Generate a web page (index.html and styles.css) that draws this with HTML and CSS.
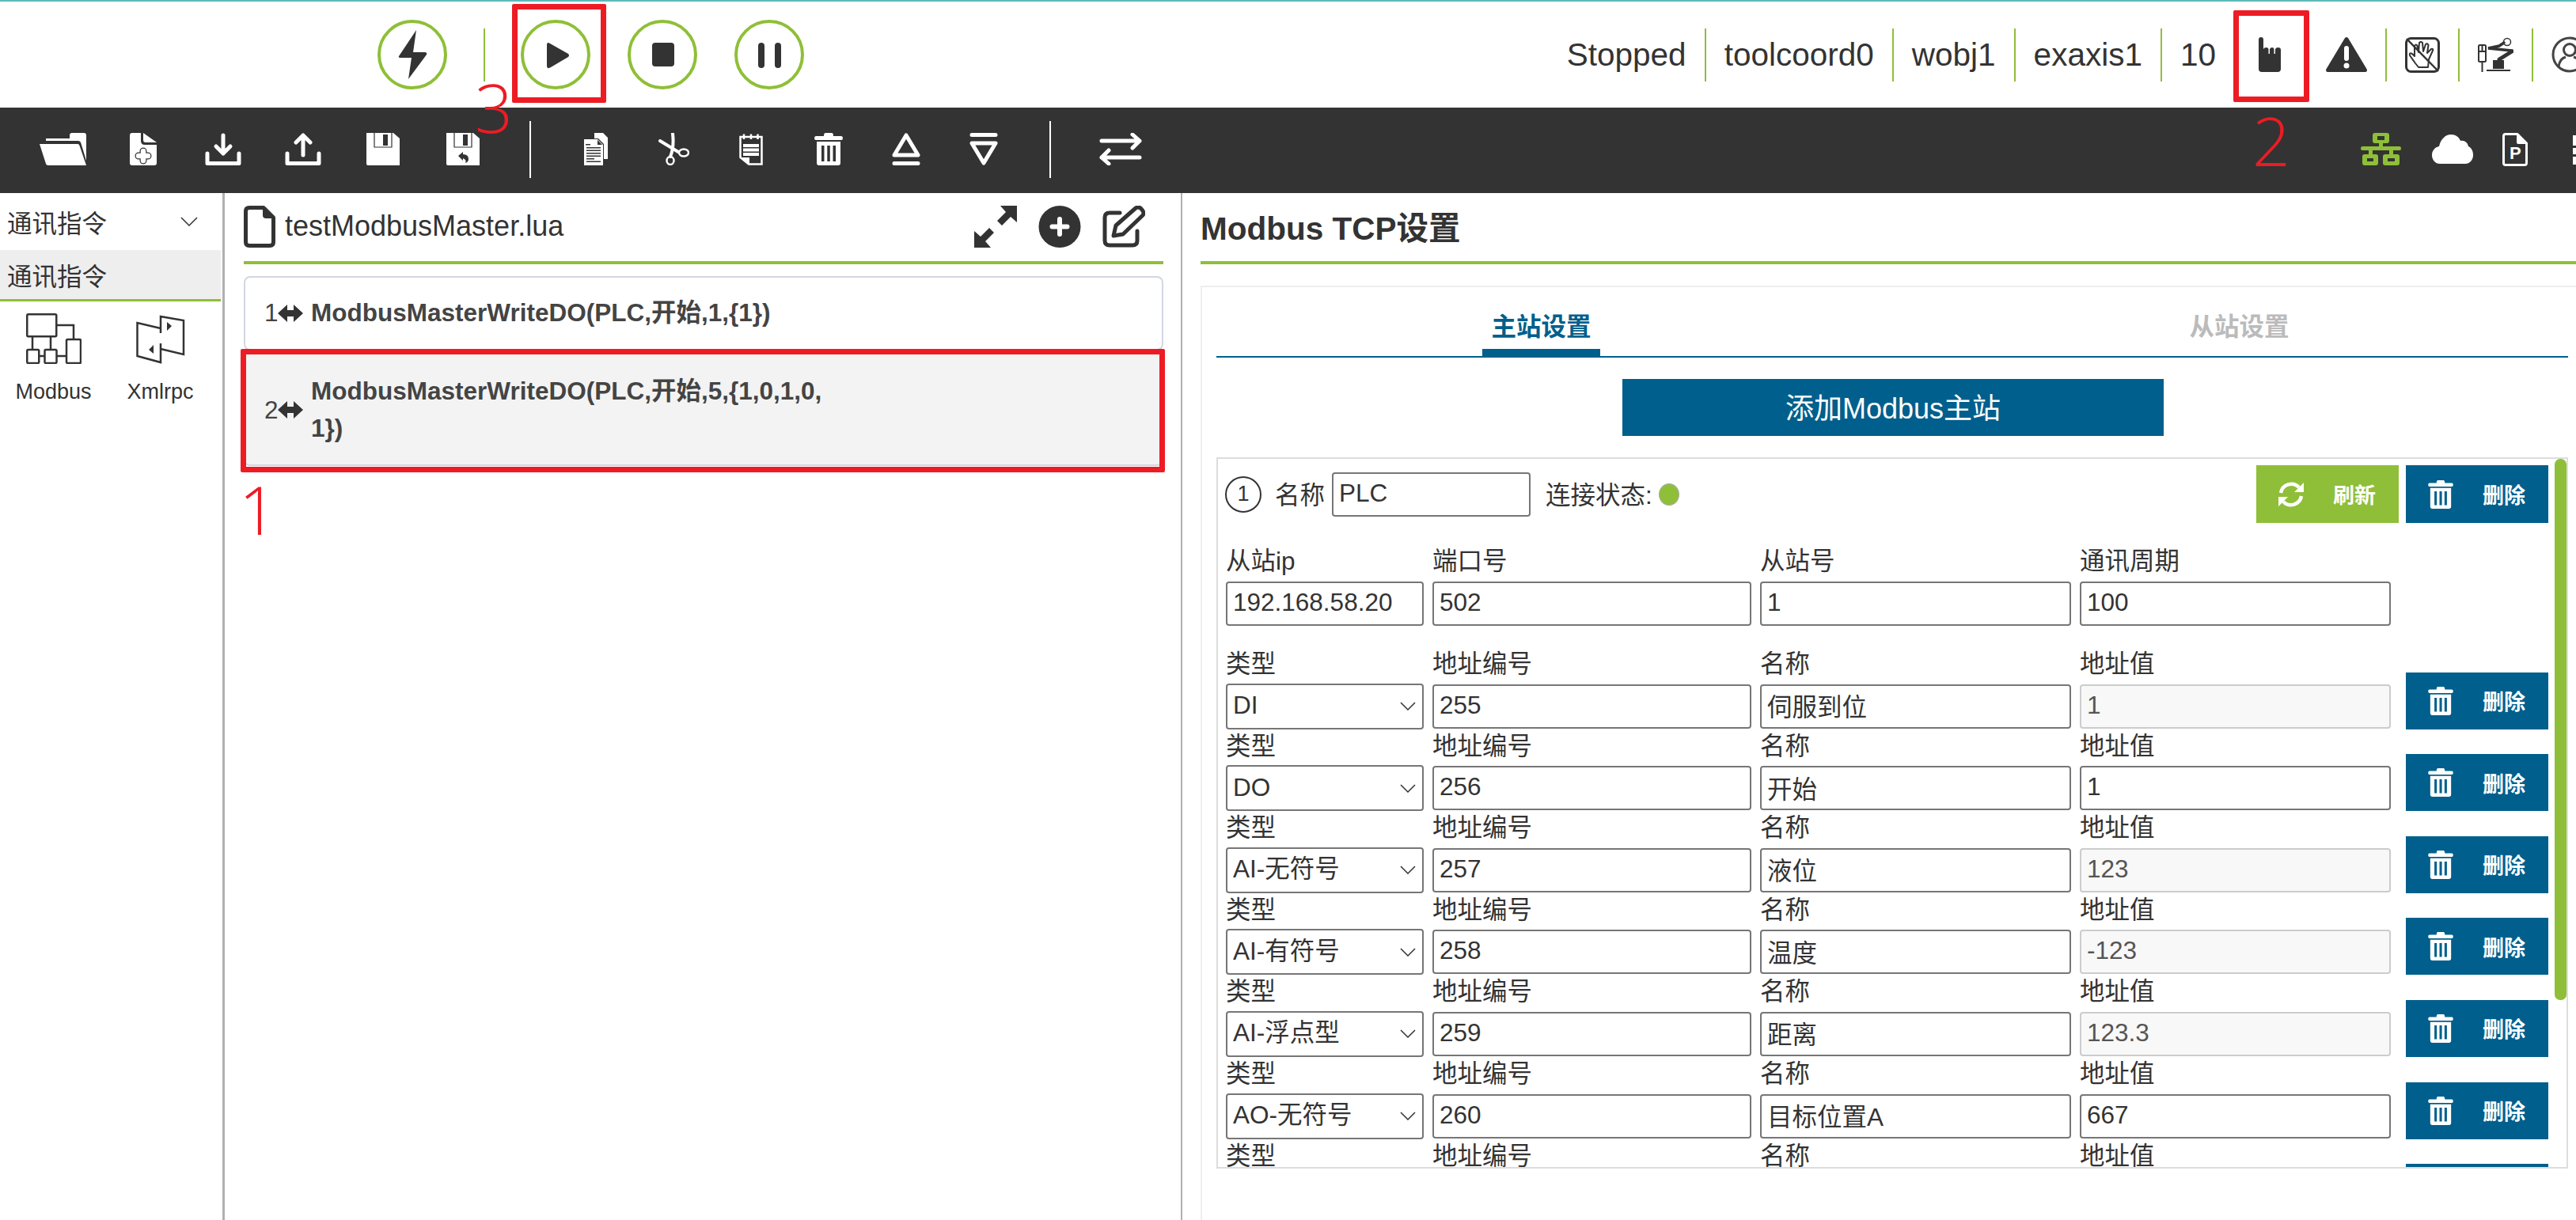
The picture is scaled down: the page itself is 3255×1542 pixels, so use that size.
FILE: index.html
```html
<!DOCTYPE html>
<html lang="zh-CN">
<head>
    <meta charset="UTF-8">
    <title>Modbus TCP设置</title>
    <link rel="stylesheet" href="styles.css">
</head>
<body>
    <!-- shared icons -->
    <svg class="sprite" width="0" height="0">
        <symbol id="i-trash" viewBox="0 0 36 41">
            <path fill="currentColor" fill-rule="evenodd" d="M14 0H22Q24 0 24 4H34Q36 4 36 6.500Q36 9 34 9H2Q0 9 0 6.500Q0 4 2 4H12Q12 0 14 0ZM3 11H33V38Q33 41 30 41H6Q3 41 3 38ZM9 16V36H12.500V16ZM16.300 16V36H19.800V16ZM23.500 16V36H27V16Z"/>
        </symbol>
        <symbol id="i-refresh" viewBox="0 0 32 32">
            <g fill="none" stroke="currentColor" stroke-width="4.500">
                <path d="M3 14A13.500 13.500 0 0 1 26 7"/>
                <path d="M29 18A13.500 13.500 0 0 1 6 25"/>
            </g>
            <path fill="currentColor" d="M32 1V13H20ZM0 31V19H12Z"/>
        </symbol>
        <symbol id="i-both" viewBox="0 0 32 24">
            <path fill="currentColor" d="M0 12L12 1V8H20V1L32 12L20 23V16H12V23Z"/>
        </symbol>
    </svg>

    <div class="topbar">
        <div class="run-btn">
            <svg width="80" height="80" viewBox="4 4 80 80"><path fill="#333" d="M49 13L27 46Q26 48 29 48H43L39 75L62 44Q63 41 60 41H45Z"/></svg>
        </div>
        <div class="run-sep"></div>
        <div class="run-btn">
            <svg width="80" height="80" viewBox="4 4 80 80"><path fill="#333" d="M33 32Q33 27 37 30L60 43Q62 45 60 47L38 60Q33 63 33 58Z"/></svg>
        </div>
        <div class="run-btn run-gap">
            <svg width="80" height="80" viewBox="4 4 80 80"><rect x="31" y="29" width="28" height="30" rx="4" fill="#333"/></svg>
        </div>
        <div class="run-btn run-gap">
            <svg width="80" height="80" viewBox="4 4 80 80"><rect x="30" y="29" width="8" height="32" rx="4" fill="#333"/><rect x="51" y="29" width="8" height="32" rx="4" fill="#333"/></svg>
        </div>

        <div class="status">
            <div class="status-item first">Stopped</div>
            <div class="status-item">toolcoord0</div>
            <div class="status-item">wobj1</div>
            <div class="status-item">exaxis1</div>
            <div class="status-item">10</div>
            <div class="status-item icons">
                <svg width="28" height="44" viewBox="0 0 28 44"><path fill="#333" d="M0 3Q0 0 3 0Q6 0 6 3V15Q7 13 9.500 13Q12 13 12.500 15V21H14V15Q15 13 17 13Q19 13 19.500 15V21H21V15Q22 13 24.500 13Q28 13 28 16V40Q28 44 24 44H4Q0 44 0 40Z"/></svg>
                <svg class="warn" width="52" height="44" viewBox="0 0 52 44"><path fill="#333" d="M24 1Q26 -1 28 1L52 41Q52 44 50 44H2Q0 44 0 41Z"/><rect x="23" y="11" width="6" height="19" rx="3" fill="#fff"/><circle cx="26" cy="36" r="3.500" fill="#fff"/></svg>
            </div>
            <div class="status-item">
                <svg width="44" height="45" viewBox="0 0 44 45">
                    <rect x="1.500" y="1.500" width="41" height="42" rx="6" fill="none" stroke="#333" stroke-width="3"/>
                    <path fill="none" stroke="#333" stroke-width="2" stroke-linejoin="round" d="M13 33L6 23Q5 19 9 21L12 24L12 11Q14 8 15.500 11L17 19L18 7Q20 5 22 7L23 18L26 9Q28 7 29.500 10L28 20L33 15Q36 14 35 17L30 28L29 38H17Z"/>
                    <path stroke="#333" stroke-width="2.500" d="M2 2L42 43"/>
                </svg>
            </div>
            <div class="status-item">
                <svg width="45" height="44" viewBox="0 0 45 44">
                    <rect x="1" y="10" width="9" height="21" rx="1.500" fill="none" stroke="#333" stroke-width="2"/>
                    <path fill="none" stroke="#333" stroke-width="2" d="M5.500 10V18M1 18H10M5.500 31V44"/>
                    <path fill="#333" d="M19 29H33V40H19ZM11 41H41V43H11Z"/>
                    <path fill="none" stroke="#333" stroke-width="5" stroke-linecap="round" d="M27 28L43 18"/>
                    <path fill="none" stroke="#333" stroke-width="3.500" stroke-linecap="round" d="M43 17L13 14L27 11L33 7"/>
                    <circle cx="37" cy="6" r="4.500" fill="none" stroke="#333" stroke-width="1.500"/>
                </svg>
            </div>
            <div class="status-item last">
                <svg width="46" height="46" viewBox="0 0 46 46">
                    <g fill="none" stroke="#444" stroke-width="3">
                        <circle cx="23" cy="23" r="21"/>
                        <circle cx="23" cy="17" r="7.500"/>
                        <path d="M9 39Q10 28 18 26M37 39Q36 28 28 26"/>
                    </g>
                </svg>
            </div>
        </div>
    </div>

    <div class="toolbar">
        <div class="tools tools-file">
            <div class="tool">
                <svg width="59" height="41" viewBox="0 0 59 41"><path fill="#fff" d="M8 7H38V3Q38 0 41 0H56Q59 0 59 3V35L52 12Q51 10 49 10H8Z"/><path fill="#fff" d="M0 14H48Q50 14 50.500 16L59 41H11Q8.500 41 8 39Z"/></svg>
            </div>
            <div class="tool">
                <svg width="34" height="41" viewBox="0 0 34 41">
                    <path fill="#fff" d="M3 0H14V10Q14 15 19 15H34V38Q34 41 31 41H3Q0 41 0 38V3Q0 0 3 0ZM17 0L34 12H20Q17 12 17 9Z"/>
                    <path stroke="#333" stroke-width="9" stroke-linecap="round" d="M17 23V35M11 29H23"/>
                    <path stroke="#fff" stroke-width="6.500" stroke-linecap="round" d="M17 23V35M11 29H23"/>
                </svg>
            </div>
            <div class="tool">
                <svg width="46" height="41" viewBox="0 0 46 41"><path fill="none" stroke="#fff" stroke-width="5" stroke-linecap="round" stroke-linejoin="round" d="M3 26V38.500H43V26M23 3V26M14 17L23 26L32 17"/></svg>
            </div>
            <div class="tool">
                <svg width="46" height="41" viewBox="0 0 46 41"><path fill="none" stroke="#fff" stroke-width="5" stroke-linecap="round" stroke-linejoin="round" d="M3 26V38.500H43V26M23 3V28M14 12L23 3L32 12"/></svg>
            </div>
            <div class="tool">
                <svg width="42" height="41" viewBox="0 0 42 41">
                    <path fill="#fff" d="M0 0H34L42 7V41H2Q0 41 0 39Z"/>
                    <path fill="none" stroke="#333" stroke-width="1.200" d="M10 0V18H32V0"/>
                    <rect x="21" y="2" width="6" height="14" fill="#333"/>
                </svg>
            </div>
            <div class="tool">
                <svg width="42" height="41" viewBox="0 0 42 41">
                    <path fill="#fff" d="M0 0H34L42 7V41H2Q0 41 0 39Z"/>
                    <path fill="none" stroke="#333" stroke-width="1.200" d="M10 0V18H32V0"/>
                    <rect x="21" y="2" width="6" height="14" fill="#333"/>
                    <path fill="#333" d="M15 29L21 24V27Q28 27 28 33Q28 37 24 38Q26 34 21 32V35Z"/>
                </svg>
            </div>
        </div>
        <div class="tool-sep"></div>
        <div class="tools tools-edit">
            <div class="tool">
                <svg width="31" height="41" viewBox="0 0 31 41">
                    <path fill="#fff" d="M13 0H24L30 6V33H25V14L18 7H13Z"/>
                    <path fill="#fff" d="M0 8H17L24 15V41H0Z"/>
                    <path fill="#333" d="M17 9L23 15H17ZM2 14H8V15.500H2ZM3 18H21V19.500H3ZM3 21.500H21V23H3ZM3 25H21V26.500H3ZM3 28.500H21V30H3ZM3 32H13V33.500H3ZM3 35.500H21V37H3Z"/>
                </svg>
            </div>
            <div class="tool">
                <svg width="39" height="41" viewBox="0 0 39 41">
                    <g fill="none" stroke="#fff" stroke-linecap="round">
                        <path stroke-width="4" d="M18 1Q20 18 15 30"/>
                        <path stroke-width="4" d="M2 10L25 24"/>
                        <ellipse cx="15" cy="35" rx="4.500" ry="5" stroke-width="2.500"/>
                        <ellipse cx="32" cy="25" rx="6" ry="4.500" stroke-width="2.500"/>
                    </g>
                </svg>
            </div>
            <div class="tool">
                <svg width="30" height="41" viewBox="0 0 30 41">
                    <path fill="none" stroke="#fff" stroke-width="2.500" d="M1.500 5H28.500V39.500H12L1.500 31ZM6 8V1.500M15 8V1.500M23.500 8V1.500"/>
                    <path fill="#fff" d="M5 14H25V18H5ZM5 19.500H25V23.500H5ZM5 25H25V29H5ZM2 31H13V40Z"/>
                </svg>
            </div>
            <div class="tool"><svg width="36" height="41"><use href="#i-trash"/></svg></div>
            <div class="tool">
                <svg width="36" height="41" viewBox="0 0 36 41"><path fill="none" stroke="#fff" stroke-width="5" stroke-linecap="round" stroke-linejoin="round" d="M18 3L33 28H3ZM3 38.500H33"/></svg>
            </div>
            <div class="tool">
                <svg width="36" height="41" viewBox="0 0 36 41"><path fill="none" stroke="#fff" stroke-width="5" stroke-linecap="round" stroke-linejoin="round" d="M18 38L33 13H3ZM3 2.500H33"/></svg>
            </div>
        </div>
        <div class="tool-sep"></div>
        <svg class="tool-swap" width="54" height="41" viewBox="0 0 54 41"><path fill="none" stroke="#fff" stroke-width="5" stroke-linecap="round" stroke-linejoin="round" d="M3 10H51M42 2L51 10L42 19M51 31H3M12 22L3 31L12 39"/></svg>

        <div class="tools-right">
            <svg width="52" height="42" viewBox="0 0 52 42">
                <path fill="#8fbf38" fill-rule="evenodd" d="M18 0H33Q36 0 36 3V10Q36 13 33 13H28V17H49Q51 17 51 19.500Q51 22 49 22H41V27H46Q49 27 49 30V38Q49 41 46 41H31Q28 41 28 38V30Q28 27 31 27H36V22H15V27H19Q22 27 22 30V38Q22 41 19 41H5Q2 41 2 38V30Q2 27 5 27H10V22H2Q0 22 0 19.500Q0 17 2 17H23V13H18Q15 13 15 10V3Q15 0 18 0ZM21 4V9H30V4ZM8 32V36H16V32ZM34 32V36H43V32Z"/>
            </svg>
            <svg width="52" height="37" viewBox="0 0 52 37"><path fill="#fff" d="M10 37C4 37 0 32 0 26C0 20 4 16 9 15C11 6 17 0 24 0C30 0 34 3 36 8C41 7 45 10 46 15C50 17 52 21 52 26C52 32 48 37 42 37Z"/></svg>
            <svg class="tool-file" width="32" height="42" viewBox="0 0 32 42">
                <path fill="none" stroke="#fff" stroke-width="3" stroke-linejoin="round" d="M1.500 4Q1.500 1.500 4 1.500H19L30.500 13V38Q30.500 40.500 28 40.500H4Q1.500 40.500 1.500 38Z"/>
                <path fill="#fff" d="M18 2L30 14H20Q18 14 18 12Z"/>
                <text x="9" y="33" class="file-p">P</text>
            </svg>
            <svg class="tool-cut" width="30" height="42" viewBox="0 0 30 42"><path fill="#fff" d="M0 3H30V16H0ZM0 19H30V27H0ZM0 30H30V40H0Z"/></svg>
        </div>
    </div>

    <div class="main">
        <!-- command palette -->
        <div class="palette">
            <div class="palette-head">
                <span>通讯指令</span>
                <svg width="22" height="12" viewBox="0 0 22 12"><path fill="none" stroke="#333" stroke-width="1.500" d="M1 1L11 11L21 1"/></svg>
            </div>
            <div class="palette-tab">通讯指令</div>
            <div class="palette-items">
                <div class="palette-item">
                    <svg width="70" height="64" viewBox="0 0 70 64">
                        <g fill="none" stroke="#333" stroke-width="2.500">
                            <rect x="1.250" y="1.250" width="37" height="28" rx="1.500"/>
                            <rect x="51" y="33" width="18" height="30" rx="1.500"/>
                            <rect x="1.250" y="46" width="15" height="17" rx="1.500"/>
                            <rect x="23.500" y="46" width="15" height="17" rx="1.500"/>
                            <path d="M38 15H60V33M8 30V46M31 30V46M16 54H24M38 54H51"/>
                        </g>
                    </svg>
                    <span>Modbus</span>
                </div>
                <div class="palette-item">
                    <svg width="62" height="64" viewBox="0 0 62 64">
                        <g fill="none" stroke="#333" stroke-width="2.500">
                            <path d="M31 25V4L60 9V52L31 45"/>
                            <path d="M31 38V62L1.500 54V12L31 19"/>
                        </g>
                        <path fill="#333" d="M39 11L45 16L39 22ZM22 40V51L16 46Z"/>
                    </svg>
                    <span>Xmlrpc</span>
                </div>
            </div>
        </div>

        <!-- program editor -->
        <div class="editor">
            <div class="editor-head">
                <svg width="40" height="53" viewBox="0 0 40 53"><path fill="none" stroke="#333" stroke-width="5" stroke-linejoin="round" d="M2.500 7Q2.500 2.500 7 2.500H25L37.500 15V46Q37.500 50.500 33 50.500H7Q2.500 50.500 2.500 46Z"/><path fill="#333" d="M24 3L37 16H28Q24 16 24 12Z"/></svg>
                <span class="file-name">testModbusMaster.lua</span>
                <div class="editor-actions">
                    <svg width="54" height="53" viewBox="0 0 54 53"><path fill="#333" d="M33 0H54V21L46 14L35 25L29 19L40 8ZM0 53V32L8 39L19 28L25 34L14 45L21 53Z"/></svg>
                    <svg width="54" height="53" viewBox="0 0 54 53"><circle cx="27" cy="26.500" r="26.500" fill="#333"/><path stroke="#fff" stroke-width="6" stroke-linecap="round" d="M27 17V36M17.500 26.500H36.500"/></svg>
                    <svg width="54" height="53" viewBox="0 0 54 53"><path fill="none" stroke="#333" stroke-width="5" stroke-linecap="round" stroke-linejoin="round" d="M22 9H9Q3 9 3 15V44Q3 50 9 50H38Q44 50 44 44V32M14 38L17 25L42 3Q46 0 50 5Q54 10 50 13L26 36Z"/></svg>
                </div>
            </div>
            <div class="cmd-list">
                <div class="cmd">
                    <span class="cmd-no">1</span>
                    <svg class="cmd-arrow" width="32" height="24"><use href="#i-both"/></svg>
                    <span class="cmd-text">ModbusMasterWriteDO(PLC,开始,1,{1})</span>
                </div>
                <div class="cmd active">
                    <span class="cmd-no">2</span>
                    <svg class="cmd-arrow" width="32" height="24"><use href="#i-both"/></svg>
                    <span class="cmd-text">ModbusMasterWriteDO(PLC,开始,5,{1,0,1,0,<br>1})</span>
                    <div class="mark mark-cmd"></div>
                </div>
            </div>
        </div>

        <!-- modbus settings -->
        <div class="settings">
            <h2 class="settings-title">Modbus TCP设置</h2>
            <div class="card">
                <div class="tabs">
                    <div class="tab on">主站设置</div>
                    <div class="tab">从站设置</div>
                </div>
                <button class="add-btn">添加Modbus主站</button>

                <div class="station">
                    <div class="scroll-thumb"></div>
                    <div class="station-head">
                        <span class="station-no">1</span>
                        <span class="name-label">名称</span>
                        <input class="name-input" type="text" value="PLC">
                        <span class="conn-label">连接状态:</span>
                        <span class="conn-dot"></span>
                        <button class="act-btn green head-first"><svg width="32" height="32"><use href="#i-refresh"/></svg>刷新</button>
                        <button class="act-btn"><svg width="32" height="36"><use href="#i-trash"/></svg>删除</button>
                    </div>

                    <div class="fields conn-fields">
                        <div class="field"><label>从站ip</label><input type="text" value="192.168.58.20"></div>
                        <div class="field"><label>端口号</label><input type="text" value="502"></div>
                        <div class="field"><label>从站号</label><input type="text" value="1"></div>
                        <div class="field"><label>通讯周期</label><input type="text" value="100"></div>
                    </div>

                    <div class="fields reg-first">
                        <div class="field"><label>类型</label><select><option>DI</option></select></div>
                        <div class="field"><label>地址编号</label><input type="text" value="255"></div>
                        <div class="field"><label>名称</label><input type="text" value="伺服到位"></div>
                        <div class="field"><label>地址值</label><input class="off" type="text" value="1" readonly></div>
                        <button class="act-btn"><svg width="32" height="36"><use href="#i-trash"/></svg>删除</button>
                    </div>
                    <div class="fields">
                        <div class="field"><label>类型</label><select><option>DO</option></select></div>
                        <div class="field"><label>地址编号</label><input type="text" value="256"></div>
                        <div class="field"><label>名称</label><input type="text" value="开始"></div>
                        <div class="field"><label>地址值</label><input type="text" value="1"></div>
                        <button class="act-btn"><svg width="32" height="36"><use href="#i-trash"/></svg>删除</button>
                    </div>
                    <div class="fields">
                        <div class="field"><label>类型</label><select><option>AI-无符号</option></select></div>
                        <div class="field"><label>地址编号</label><input type="text" value="257"></div>
                        <div class="field"><label>名称</label><input type="text" value="液位"></div>
                        <div class="field"><label>地址值</label><input class="off" type="text" value="123" readonly></div>
                        <button class="act-btn"><svg width="32" height="36"><use href="#i-trash"/></svg>删除</button>
                    </div>
                    <div class="fields">
                        <div class="field"><label>类型</label><select><option>AI-有符号</option></select></div>
                        <div class="field"><label>地址编号</label><input type="text" value="258"></div>
                        <div class="field"><label>名称</label><input type="text" value="温度"></div>
                        <div class="field"><label>地址值</label><input class="off" type="text" value="-123" readonly></div>
                        <button class="act-btn"><svg width="32" height="36"><use href="#i-trash"/></svg>删除</button>
                    </div>
                    <div class="fields">
                        <div class="field"><label>类型</label><select><option>AI-浮点型</option></select></div>
                        <div class="field"><label>地址编号</label><input type="text" value="259"></div>
                        <div class="field"><label>名称</label><input type="text" value="距离"></div>
                        <div class="field"><label>地址值</label><input class="off" type="text" value="123.3" readonly></div>
                        <button class="act-btn"><svg width="32" height="36"><use href="#i-trash"/></svg>删除</button>
                    </div>
                    <div class="fields">
                        <div class="field"><label>类型</label><select><option>AO-无符号</option></select></div>
                        <div class="field"><label>地址编号</label><input type="text" value="260"></div>
                        <div class="field"><label>名称</label><input type="text" value="目标位置A"></div>
                        <div class="field"><label>地址值</label><input type="text" value="667"></div>
                        <button class="act-btn"><svg width="32" height="36"><use href="#i-trash"/></svg>删除</button>
                    </div>
                    <div class="fields">
                        <div class="field"><label>类型</label><select></select></div>
                        <div class="field"><label>地址编号</label><input type="text"></div>
                        <div class="field"><label>名称</label><input type="text"></div>
                        <div class="field"><label>地址值</label><input type="text"></div>
                        <button class="act-btn"></button>
                    </div>
                </div>
            </div>
        </div>
    </div>

    <!-- red annotations drawn over the screenshot -->
    <div class="mark mark-play"></div>
    <div class="mark mark-hand"></div>
    <div class="note note-1">1</div>
    <div class="note note-2">2</div>
    <div class="note note-3">3</div>
</body>
</html>
```

FILE: styles.css
```css
* {
    box-sizing: border-box;
}
html, body {
    height: 100%;
}
body {
    position: relative;
    margin: 0;
    overflow: hidden;
    background: #fff;
    color: #333;
    font-family: "Liberation Sans", "Noto Sans CJK SC", sans-serif;
    font-size: 31.5px;
}
svg {
    display: block;
    flex-shrink: 0;
}
.sprite {
    position: absolute;
}

/* top bar */
.topbar {
    display: flex;
    align-items: center;
    height: 136px;
    padding-left: 477px;
    border-top: 2px solid #5fb9b9;
    overflow: hidden;
}
.run-btn {
    width: 88px;
    height: 88px;
    flex-shrink: 0;
    border: 4px solid #8fbf38;
    border-radius: 50%;
}
.run-gap {
    margin-left: 47px;
}
.run-sep {
    width: 2px;
    height: 67px;
    margin: 0 45px 0 46px;
    background: #8fbf38;
}
.status {
    display: flex;
    align-items: center;
    margin-left: auto;
    margin-right: -15px;
    font-size: 40.5px;
}
.status-item {
    display: flex;
    align-items: center;
    height: 67px;
    padding: 0 23px;
    border-left: 2px solid #8fbf38;
    white-space: nowrap;
}
.status-item.first {
    border-left: none;
}
.status-item.icons {
    padding-left: 29px;
}
.status-item.last {
    padding-right: 0;
}
.warn {
    margin-left: 57px;
}

/* dark toolbar */
.toolbar {
    display: flex;
    align-items: center;
    height: 108px;
    padding: 0 0 3px 29px;
    background: #333;
    color: #fff;
    overflow: hidden;
}
.tools {
    display: flex;
    flex-shrink: 0;
}
.tool {
    display: flex;
    justify-content: center;
    width: 101px;
}
.tools-edit .tool {
    width: 98px;
}
.tool-sep {
    width: 2px;
    height: 72px;
    margin: 0 33px 0 34px;
    background: #fff;
    flex-shrink: 0;
}
.tool-swap {
    margin-left: 28px;
}
.tools-right {
    display: flex;
    align-items: center;
    gap: 38px;
    margin-left: auto;
    margin-right: -26px;
}
.tool-file {
    margin-left: -1px;
}
.tool-cut {
    margin-left: 19px;
}
.file-p {
    fill: #fff;
    font-family: "Liberation Sans", sans-serif;
    font-size: 22px;
    font-weight: bold;
}

/* three columns */
.main {
    display: flex;
    height: 1298px;
    overflow: hidden;
}
.palette {
    width: 284px;
    flex-shrink: 0;
    border-right: 3px solid #b0b0b0;
}
.palette-head {
    display: flex;
    align-items: center;
    justify-content: space-between;
    height: 72px;
    padding: 0 31px 0 9px;
}
.palette-tab {
    display: flex;
    align-items: center;
    height: 65px;
    width: 279px;
    padding-left: 9px;
    background: #eee;
    border-bottom: 3px solid #8fbf38;
}
.palette-items {
    display: flex;
    padding-top: 15px;
}
.palette-item {
    display: flex;
    flex-direction: column;
    align-items: center;
    width: 135px;
    font-size: 27px;
}
.palette-item span {
    margin-top: 20px;
}

.editor {
    width: 1210px;
    flex-shrink: 0;
    padding: 16px 22px 0 24px;
    border-right: 2px solid #b0b0b0;
}
.editor-head {
    display: flex;
    align-items: center;
    height: 74px;
    padding-bottom: 17px;
    border-bottom: 4px solid #8fbf38;
    margin-bottom: 15px;
}
.file-name {
    margin-left: 12px;
    padding-bottom: 2px;
    font-size: 36px;
}
.editor-actions {
    display: flex;
    gap: 27px;
    margin-left: auto;
    margin-right: 23px;
}
.cmd {
    position: relative;
    display: flex;
    align-items: center;
    padding: 21px 0 22px 24px;
    border: 2px solid #d3d6e3;
    border-radius: 8px;
    margin-bottom: 5px;
    color: #444;
    font-weight: bold;
}
.cmd.active {
    background: #f3f3f3;
    border-color: #f3f3f3 #f3f3f3 #d3d6e3;
}
.cmd-no {
    font-weight: normal;
    width: 16px;
}
.cmd-arrow {
    margin-left: 1px;
    color: #333;
}
.cmd-text {
    margin-left: 10px;
    line-height: 47px;
    white-space: nowrap;
}

.settings {
    flex: 1;
    min-width: 0;
    padding: 16px 0 0 23px;
}
.settings-title {
    display: flex;
    align-items: center;
    height: 74px;
    margin: 0 0 27px;
    padding-bottom: 19px;
    border-bottom: 4px solid #8fbf38;
    font-size: 40.5px;
}
.card {
    width: 1748px;
    height: 1300px;
    padding: 0 0 0 18px;
    border: 2px solid #eee;
}
.tabs {
    display: flex;
    width: 1708px;
    height: 89px;
    border-bottom: 2.500px solid #005f8c;
}
.tab {
    width: 149px;
    height: 87px;
    margin-left: 733px;
    padding-top: 32px;
    color: #bbb;
    font-size: 31.500px;
    font-weight: bold;
    line-height: 36px;
    text-align: center;
}
.tab.on {
    margin-left: 336px;
    color: #005f8c;
    border-bottom: 9px solid #005f8c;
}
.add-btn {
    display: block;
    width: 684px;
    height: 72px;
    margin: 27px 0 27px 513px;
    padding: 0 0 5px;
    border: none;
    background: #005f8c;
    color: #fff;
    font-family: inherit;
    font-size: 36px;
}
.station {
    position: relative;
    width: 1708px;
    height: 899px;
    padding: 8px 0 0 10px;
    border: 2px solid #ddd;
    overflow: hidden;
}
.scroll-thumb {
    position: absolute;
    top: 0;
    right: 0;
    width: 15px;
    height: 684px;
    background: #8fbf38;
    border-radius: 7px;
}
.station-head {
    display: flex;
    align-items: center;
}
.station-no {
    display: flex;
    align-items: center;
    justify-content: center;
    width: 46px;
    height: 46px;
    margin-left: -1px;
    border: 2px solid #333;
    border-radius: 50%;
    font-size: 27px;
}
.name-label {
    margin-left: 17px;
    padding-bottom: 3px;
}
.name-input {
    width: 251px;
    margin-left: 9px;
}
.conn-label {
    margin-left: 19px;
    padding-bottom: 3px;
}
.conn-dot {
    width: 26px;
    height: 28px;
    margin-left: 8px;
    background: #8fbf38;
    border-radius: 50%;
    border: 1px solid #aaa;
}
.head-first {
    margin-left: auto;
    margin-right: 9px;
}
.act-btn {
    display: flex;
    align-items: center;
    gap: 37px;
    width: 180px;
    height: 73px;
    padding: 0 0 0 28px;
    flex-shrink: 0;
    border: none;
    background: #005f8c;
    color: #fff;
    font-family: inherit;
    font-size: 27px;
    font-weight: bold;
}
.act-btn.green {
    background: #8fbf38;
}
.station-head .act-btn:last-child {
    margin-right: 23px;
}
.fields {
    display: grid;
    grid-template-columns: 250px 403px 393px 393px 180px;
    column-gap: 11px;
    align-items: end;
    height: 103.600px;
}
.fields .act-btn {
    height: 72px;
    margin-left: 8px;
}
.conn-fields {
    margin-top: 27px;
    height: 102px;
}
.reg-first {
    margin-top: 28px;
}
.field label {
    display: block;
    height: 45.600px;
    line-height: 42px;
}
input, select {
    height: 56px;
    border: 2px solid #767676;
    border-radius: 4px;
    background: #fff;
    color: #333;
    font-family: inherit;
    font-size: 31.500px;
}
input {
    padding: 0 7px 3px;
}
.field input {
    display: block;
    width: 100%;
    margin: 1px 0;
}
.field select {
    display: block;
    width: 100%;
    height: 58px;
    padding: 0 0 3px 7px;
    appearance: none;
    background: #fff url("data:image/svg+xml,%3Csvg xmlns='http://www.w3.org/2000/svg' width='20' height='11'%3E%3Cpath fill='none' stroke='%23333' stroke-width='1.500' d='M1 1L10 10L19 1'/%3E%3C/svg%3E") no-repeat right 8px center;
}
input.off {
    background: #f8f8f8;
    border-color: #ccc;
    color: #555;
}

/* red annotations */
.mark {
    position: absolute;
    border: 7px solid #ed1c24;
    border-radius: 2px;
}
.mark-cmd {
    top: -9px;
    bottom: -10px;
    left: -6px;
    right: -4px;
}
.mark-play {
    top: 5px;
    left: 647px;
    width: 119px;
    height: 125px;
}
.mark-hand {
    top: 13px;
    left: 2822px;
    width: 96px;
    height: 116px;
}
.note {
    position: absolute;
    color: #ed1c24;
    font-family: "Open Sans", sans-serif;
    font-size: 84px;
    font-weight: 350;
    line-height: 84px;
}
.note-1 {
    top: 602px;
    left: 302px;
}
.note-2 {
    top: 136px;
    left: 2846px;
}
.note-3 {
    top: 94px;
    left: 600px;
}
```
